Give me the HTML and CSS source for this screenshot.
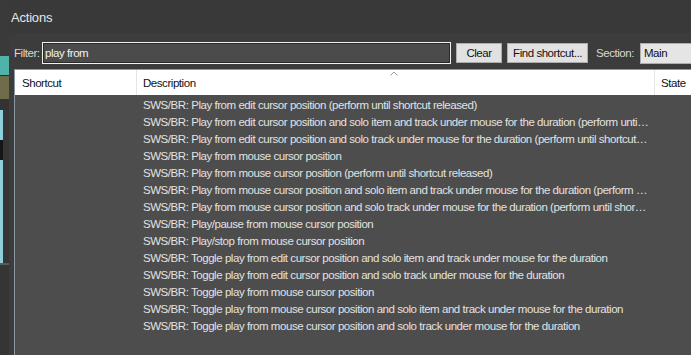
FILE: index.html
```html
<!DOCTYPE html>
<html>
	<head>
		<title>Actions</title>
		<link rel="stylesheet" href="styles.css">
	</head>
	<body>
		<div class="desk">
			<div class="strip">
				<div class="blk top"></div>
				<div class="blk teal"></div>
				<div class="blk olive"></div>
				<div class="blk dark"></div>
				<div class="blk sky"><div class="hole"></div></div>
				<div class="blk dark2"></div>
			</div>
			<div class="dialog">
				<div class="titlebar">Actions</div>
				<div class="filter-row">
					<label class="lbl">Filter:</label>
					<input class="filter" type="text" value="play from">
					<button class="btn clear">Clear</button>
					<button class="btn find">Find shortcut...</button>
					<label class="lbl section">Section:</label>
					<div class="select">Main</div>
				</div>
				<div class="list">
					<div class="head">
						<div class="col c1">Shortcut</div>
						<div class="col c2">Description
							<svg class="sort" width="8" height="5" viewBox="0 0 8 5"><polyline points="0.5,4.5 4,1 7.5,4.5" fill="none" stroke="#9a9a9a" stroke-width="1"/></svg>
						</div>
						<div class="col c3">State</div>
					</div>
					<div class="rows" id="rows"></div>
				</div>
			</div>
		</div>
		<script>
			var actions = [
				'SWS/BR: Play from edit cursor position (perform until shortcut released)',
				'SWS/BR: Play from edit cursor position and solo item and track under mouse for the duration (perform until shortcut released)',
				'SWS/BR: Play from edit cursor position and solo track under mouse for the duration (perform until shortcut released)',
				'SWS/BR: Play from mouse cursor position',
				'SWS/BR: Play from mouse cursor position (perform until shortcut released)',
				'SWS/BR: Play from mouse cursor position and solo item and track under mouse for the duration (perform until shortcut released)',
				'SWS/BR: Play from mouse cursor position and solo track under mouse for the duration (perform until shortcut released)',
				'SWS/BR: Play/pause from mouse cursor position',
				'SWS/BR: Play/stop from mouse cursor position',
				'SWS/BR: Toggle play from edit cursor position and solo item and track under mouse for the duration',
				'SWS/BR: Toggle play from edit cursor position and solo track under mouse for the duration',
				'SWS/BR: Toggle play from mouse cursor position',
				'SWS/BR: Toggle play from mouse cursor position and solo item and track under mouse for the duration',
				'SWS/BR: Toggle play from mouse cursor position and solo track under mouse for the duration'
			];
			var $rows = document.getElementById('rows');
			for(var i = 0; i < actions.length; i++) {
				var $row = document.createElement('div');
				$row.className = 'row';
				$row.innerHTML = '<div class="col c1"></div><div class="col c2"></div><div class="col c3"></div>';
				$row.children[1].textContent = actions[i];
				$rows.appendChild($row);
			}
		</script>
	</body>
</html>
```
FILE: styles.css
```css
html, body {
	margin: 0;
	padding: 0;
	background: #3a3a3a;
	overflow: hidden;
}
body {
	font-family: "Liberation Sans", Arial, sans-serif;
	font-size: 11.5px;
	letter-spacing: -0.45px;
}
.desk {
	display: flex;
	width: 691px;
	height: 355px;
}
.strip {
	width: 9px;
	display: flex;
	flex-direction: column;
	flex-shrink: 0;
}
.blk.top { height: 56px; background: #3a3a3a; }
.blk.teal { height: 19px; background: #4fb3a9; }
.blk.olive { height: 23px; background: #6e6c4a; border-top: 1px solid #2a2a2a; }
.blk.dark { height: 11px; background: #333; }
.blk.sky {
	height: 153px;
	background: linear-gradient(to right, #8fcfdc 3px, #353535 3px);
	position: relative;
}
.hole {
	position: absolute;
	left: 0;
	top: 30px;
	width: 3px;
	height: 20px;
	background: #151515;
}
.blk.dark2 { flex: 1; background: #353535; border-top: 2px solid #5a5a5a; }

.dialog {
	flex: 1;
	display: flex;
	flex-direction: column;
	background: #3c3c3c;
	min-width: 0;
}
.titlebar {
	height: 33px;
	line-height: 35px;
	padding-left: 2px;
	color: #e6e6e6;
	font-size: 13px;
	letter-spacing: -0.2px;
	background: #393939;
}
.filter-row {
	display: flex;
	align-items: center;
	height: 22px;
	margin-top: 9px;
	padding-left: 5px;
	white-space: nowrap;
}
.filter-row > * { flex-shrink: 0; }
.lbl {
	color: #d8d8d8;
	width: 28px;
}
.filter {
	box-sizing: border-box;
	width: 409px;
	height: 22px;
	margin: 0;
	padding: 0 2px;
	background: #4b4b4b;
	border: 1px solid #f0f0f0;
	box-shadow: inset 0 0 0 1px #2a2a2a;
	color: #f2f2f2;
	font-family: inherit;
	font-size: 11.5px;
	letter-spacing: -0.45px;
	outline: none;
}
.btn {
	box-sizing: border-box;
	height: 20px;
	margin: 0 0 0 5px;
	padding: 0;
	background: #e1e1e1;
	border: 1px solid #adadad;
	color: #111;
	font-family: inherit;
	font-size: 11.5px;
	letter-spacing: -0.45px;
}
.clear { width: 46px; }
.find { width: 81px; }
.section { width: auto; margin-left: 8px; margin-right: 6px; }
.select {
	width: 80px;
	height: 21px;
	line-height: 18px;
	padding-left: 3px;
	background: #e5e5e5;
	border: 1px solid #adadad;
	color: #111;
	box-sizing: border-box;
}

.list {
	flex: 1;
	margin: 5px 0 0 5px;
	background: #4d4d4d;
	border-left: 1px solid #8b97a1;
	min-width: 0;
	overflow: hidden;
}
.head {
	display: flex;
	height: 25px;
	line-height: 27px;
	background: #ffffff;
	color: #111;
	border-top: 1px solid #8b97a1;
	margin-bottom: 1px;
}
.head .col { border-right: 1px solid #e5e5e5; }
.col {
	flex-shrink: 0;
	box-sizing: border-box;
	white-space: nowrap;
	overflow: hidden;
	text-overflow: ellipsis;
}
.c1 { width: 122px; padding-left: 7px; }
.c2 { width: 518px; padding: 0 6px; position: relative; }
.c3 { width: 60px; padding-left: 6px; }
.sort {
	position: absolute;
	left: 253px;
	top: 1px;
}
.row {
	display: flex;
	height: 17px;
	line-height: 18px;
	color: #e2e2e2;
}
```
